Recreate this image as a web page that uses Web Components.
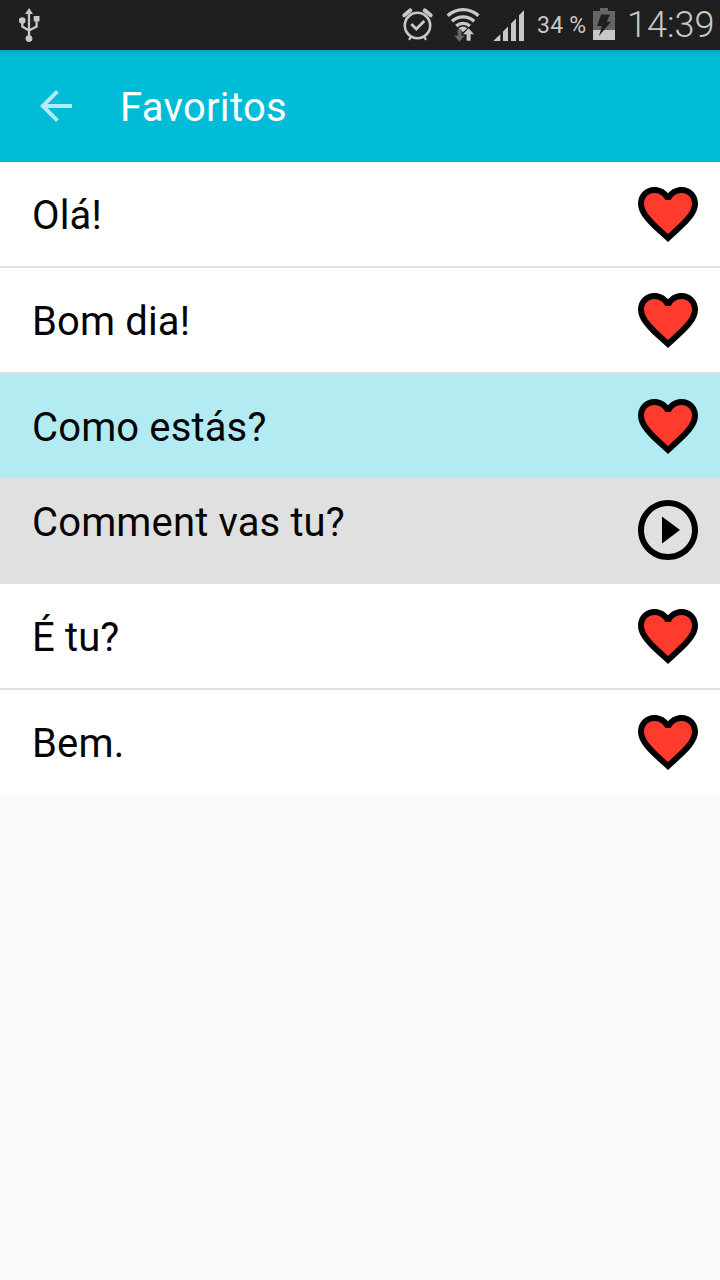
<!DOCTYPE html>
<html lang="pt">
<head>
<meta charset="utf-8">
<title>Favoritos</title>
<style>
  html, body { margin: 0; height: 100%; }
  body { background: #fafafa; font-family: Roboto, "Noto Sans", sans-serif; overflow: hidden; }
</style>
</head>
<body>
<phrase-app></phrase-app>
<script>
class BaseElement extends HTMLElement {
  constructor() {
    super();
    const t = document.createElement('template');
    t.innerHTML = this.constructor.markup;
    this.attachShadow({ mode: 'open' }).append(t.content.cloneNode(true));
  }
}

class StatusBar extends BaseElement {
  static markup = `
    <style>
      :host { display: flex; height: 50px; background: #1f1f1f; color: #c8c8c8; box-sizing: border-box; }
      svg { display: block; flex: none; fill: #c8c8c8; }
      .gap { flex: 1; }
      .battery { font-size: 23px; line-height: 50px; padding-top: 1px; width: 56px; white-space: nowrap; letter-spacing: .2px; }
      .clock { font-size: 36px; font-weight: 300; line-height: 50px; width: 93px; white-space: nowrap; }
    </style>
    <svg width="58" height="50" viewBox="0 0 58 50">
      <path d="M29 8l4 6h-8z"/><circle cx="22.3" cy="20.6" r="3.3"/><path d="M33.7 16h5.8v5.4h-5.8z"/><circle cx="29" cy="38.6" r="3.4"/>
      <path d="M29 13v24M22.3 22v4.5l6.7 4M36.6 20v6.5l-7.6 4" fill="none" stroke="#c8c8c8" stroke-width="2.3"/>
    </svg>
    <span class="gap"></span>
    <svg width="137" height="50" viewBox="400 0 137 50">
      <g fill="none" stroke="#c8c8c8">
        <circle cx="417.5" cy="25.5" r="12.7" stroke-width="2.6"/>
        <path d="M411.3 24l5 5 8-8" stroke-width="2.8"/>
        <path d="M404.3 15.2l6-4.8M430.7 15.2l-6-4.8" stroke-width="4" stroke-linecap="round"/>
        <path d="M411 36.5l-2 3.4M424 36.5l2 3.4" stroke-width="2.2"/>
        <path d="M447.7 15.8a22.5 22.5 0 0 1 30.8 0M452 21.2a16.5 16.5 0 0 1 22.2 0M456.3 26a10 10 0 0 1 13.6 0" stroke-width="3.3"/>
      </g>
      <path d="M458.5 28.4q4.5-4 9 0l-4.5 3.7z"/>
      <path stroke="#1f1f1f" stroke-width="1.6" paint-order="stroke" d="M468.6 28.3l5.4 6h-3.4v6.4h-4v-6.4h-3.5z"/>
      <path fill="#686868" d="M457.6 29.6h4v6.2h3l-5.2 6-5.1-6h3.3z"/>
      <path d="M493.3 41l7-6.8V41zM503 31.4l5-5V41h-5zM511 23.4l5-5V41h-5zM519 15.2l5-5V41h-5z"/>
    </svg>
    <span class="battery">34 %</span>
    <svg width="34" height="50" viewBox="593 0 34 50">
      <path fill="#656565" d="M593 11h7V8h8v3h7v19h-22z"/><path d="M593 30h22v10h-22z"/>
      <path fill="#1f1f1f" d="M601 14.5h9l-3.2 7.2h4.2L599 36l2.9-10h-4.7z"/>
    </svg>
    <span class="clock">14:39</span>`;
}
customElements.define('status-bar', StatusBar);

class AppToolbar extends BaseElement {
  static markup = `
    <style>
      :host { display: flex; align-items: center; height: 112px; padding-left: 32px; box-sizing: border-box; color: #fff;
        background: linear-gradient(#00a5ba 0, #00b5cb 3px, #00bcd7 7px); }
      svg { display: block; width: 48px; height: 48px; margin-right: 40px; fill: #b2ebf2; }
      h1 { margin: 0; font-size: 40px; font-weight: 400; line-height: 48px; padding-top: 4px; letter-spacing: .3px; }
    </style>
    <svg viewBox="0 0 24 24"><path d="M20 11H7.83l5.59-5.59L12 4l-8 8 8 8 1.41-1.41L7.83 13H20v-2z"/></svg>
    <h1><slot></slot></h1>`;
}
customElements.define('app-toolbar', AppToolbar);

class HeartIcon extends BaseElement {
  static markup = `
    <style>:host { display: block; } svg { display: block; width: 72px; height: 72px; }</style>
    <svg viewBox="0 0 24 24">
      <path fill="#ff3b2d" d="M12 20L4 13 2.8 8 5 4.2 9 4l2.5 2.8h1L15 4l4 .2L21.2 8 20 13z"/>
      <path d="M16.5 3c-1.74 0-3.41.81-4.5 2.09C10.91 3.81 9.24 3 7.5 3 4.42 3 2 5.42 2 8.5c0 3.78 3.4 6.86 8.55 11.54L12 21.35l1.45-1.32C18.6 15.36 22 12.28 22 8.5 22 5.42 19.58 3 16.5 3zm-4.4 15.55l-.1.1-.1-.1C7.14 14.24 4 11.39 4 8.5 4 6.5 5.5 5 7.5 5c1.54 0 3.04.99 3.57 2.36h1.87C13.46 5.99 14.96 5 16.5 5c2 0 3.5 1.5 3.5 3.5 0 2.89-3.14 5.74-7.9 10.05z"/>
    </svg>`;
}
customElements.define('heart-icon', HeartIcon);

class PlayIcon extends BaseElement {
  static markup = `
    <style>:host { display: block; } svg { display: block; width: 72px; height: 72px; }</style>
    <svg viewBox="0 0 24 24"><path d="M10 16.5l6-4.5-6-4.5v9zM12 2C6.48 2 2 6.48 2 12s4.48 10 10 10 10-4.48 10-10S17.52 2 12 2zm0 18c-4.41 0-8-3.59-8-8s3.59-8 8-8 8 3.59 8 8-3.59 8-8 8z"/></svg>`;
}
customElements.define('play-icon', PlayIcon);

class PhraseRow extends BaseElement {
  static markup = `
    <style>
      :host { display: flex; align-items: center; justify-content: space-between; height: 104px; padding: 0 16px 0 32px;
        box-sizing: border-box; background: #fff; color: #050505; font-size: 40px; line-height: 48px; letter-spacing: .14px; }
      :host([divider]) { height: 106px; border-bottom: 2px solid #e0e0e0; }
      :host([selected]) { background: #b2ebf2; }
      :host([translation]) { height: 106px; padding-bottom: 2px; background: #e0e0e0; }
      .text { padding-top: 4px; }
      :host([translation]) .text { padding: 0 0 14px; }
    </style>
    <span class="text"><slot></slot></span><slot name="action"></slot>`;
}
customElements.define('phrase-row', PhraseRow);

class PhraseApp extends BaseElement {
  static markup = `
    <style>:host { display: flex; flex-direction: column; height: 100vh; background: #fafafa; }</style>
    <status-bar></status-bar>
    <app-toolbar>Favoritos</app-toolbar>
    <phrase-row divider>Olá!<heart-icon slot="action"></heart-icon></phrase-row>
    <phrase-row divider>Bom dia!<heart-icon slot="action"></heart-icon></phrase-row>
    <phrase-row selected>Como estás?<heart-icon slot="action"></heart-icon></phrase-row>
    <phrase-row translation>Comment vas tu?<play-icon slot="action"></play-icon></phrase-row>
    <phrase-row divider>É tu?<heart-icon slot="action"></heart-icon></phrase-row>
    <phrase-row>Bem.<heart-icon slot="action"></heart-icon></phrase-row>`;
}
customElements.define('phrase-app', PhraseApp);
</script>
</body>
</html>
